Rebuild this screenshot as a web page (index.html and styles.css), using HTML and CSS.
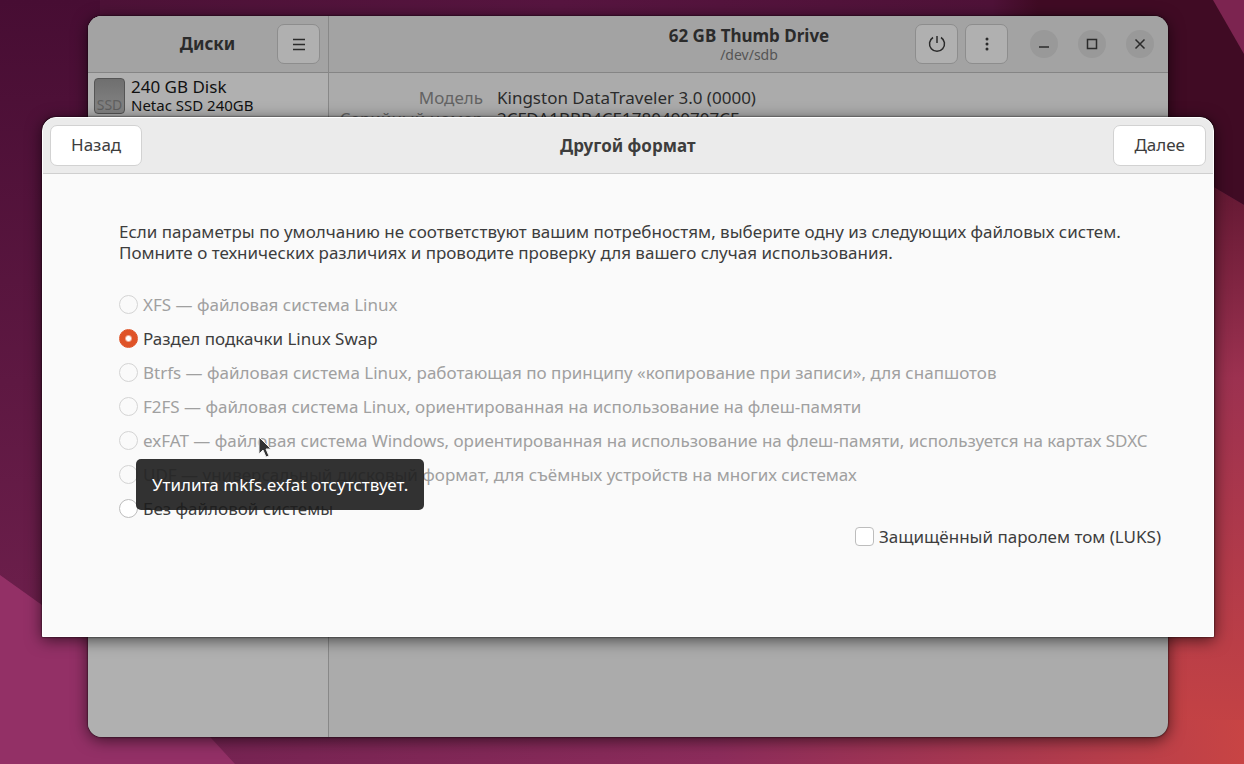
FILE: index.html
```html
<!DOCTYPE html>
<html lang="ru">
<head>
  <meta charset="UTF-8" />
  <meta name="viewport" content="width=device-width, initial-scale=1.0" />
  <title>Диски</title>
  <link rel="stylesheet" href="styles.css">
</head>
<body>
  <!-- Wallpaper -->
  <svg class="wallpaper" viewBox="0 0 1244 764" preserveAspectRatio="none" aria-hidden="true">
    <defs>
      <linearGradient id="left" x1="0" y1="0" x2="0" y2="1">
        <stop offset="0" stop-color="#470d33" />
        <stop offset="1" stop-color="#752351" />
      </linearGradient>
      <linearGradient id="top" x1="0" y1="0" x2="1" y2="0">
        <stop offset="0" stop-color="#4d1237" />
        <stop offset="0.4" stop-color="#571540" />
        <stop offset="0.78" stop-color="#4f1238" />
        <stop offset="0.82" stop-color="#400b24" />
        <stop offset="1" stop-color="#400b24" />
      </linearGradient>
      <linearGradient id="right" x1="0" y1="0" x2="0" y2="1">
        <stop offset="0" stop-color="#501029" />
        <stop offset="0.4" stop-color="#9c3150" />
        <stop offset="1" stop-color="#c84443" />
      </linearGradient>
      <linearGradient id="bottom" x1="0" y1="0" x2="1" y2="0">
        <stop offset="0" stop-color="#752352" />
        <stop offset="0.5" stop-color="#8c2c5b" />
        <stop offset="0.8" stop-color="#ad3a4e" />
        <stop offset="1" stop-color="#c84444" />
      </linearGradient>
    </defs>
    <rect width="1244" height="764" fill="url(#left)" />
    <path d="M100 0H1244V205L1100 120H100Z" fill="url(#top)" />
    <path d="M1213 0H1244V54Z" fill="#7c2450" />
    <path d="M1100 120L1244 205V764H1100Z" fill="url(#right)" />
    <path d="M190 720H1244V764H235Z" fill="url(#bottom)" />
    <path d="M0 575L42 605L130 650L235 764H0Z" fill="#933066" />
  </svg>

  <main class="window">
    <aside class="sidebar">
      <header class="headerbar sidebar-header">
        <h1 class="title">Диски</h1>
        <button class="button icon-button" aria-label="Меню">
          <svg width="16" height="16" viewBox="0 0 16 16"><path d="M2 3.5h12M2 8.5h12M2 13.5h12" /></svg>
        </button>
      </header>
      <div class="disk">
        <span class="disk-icon">SSD</span>
        <div>
          <div class="disk-name">240 GB Disk</div>
          <div class="disk-model">Netac SSD 240GB</div>
        </div>
      </div>
    </aside>

    <section class="content">
      <header class="headerbar content-header">
        <div class="heading">
          <h2 class="title">62 GB Thumb Drive</h2>
          <div class="subtitle">/dev/sdb</div>
        </div>
        <div class="header-actions">
          <button class="button icon-button" aria-label="Отключить">
            <svg width="20" height="20" viewBox="0 0 20 20"><path d="M10 2v7M6 3.5a7.5 7.5 0 1 0 8 0" /></svg>
          </button>
          <button class="button icon-button" aria-label="Ещё">
            <svg class="dots" width="16" height="16" viewBox="0 0 16 16"><circle cx="8" cy="3" r="1.5" /><circle cx="8" cy="8" r="1.5" /><circle cx="8" cy="13" r="1.5" /></svg>
          </button>
        </div>
        <div class="window-controls">
          <button class="control" aria-label="Свернуть">
            <svg width="14" height="14" viewBox="0 0 14 14"><path d="M2 10h10" /></svg>
          </button>
          <button class="control" aria-label="Развернуть">
            <svg width="14" height="14" viewBox="0 0 14 14"><path d="M2.5 2.5h9v9h-9z" /></svg>
          </button>
          <button class="control" aria-label="Закрыть">
            <svg width="14" height="14" viewBox="0 0 14 14"><path d="M2.5 2.5l9 9M11.5 2.5l-9 9" /></svg>
          </button>
        </div>
      </header>
      <dl class="details">
        <dt>Модель</dt>
        <dd>Kingston DataTraveler 3.0 (0000)</dd>
        <dt>Серийный номер</dt>
        <dd>2CFDA1BBB4CE1780490707CF</dd>
      </dl>
    </section>
  </main>

  <form class="dialog" role="dialog" aria-labelledby="dialog-title">
    <header class="dialog-header">
      <button type="button" class="button">Назад</button>
      <h2 class="title" id="dialog-title">Другой формат</h2>
      <button type="button" class="button">Далее</button>
    </header>
    <div class="dialog-body">
      <p class="intro">Если параметры по умолчанию не соответствуют вашим потребностям, выберите одну из следующих файловых систем.<br>Помните о технических различиях и проводите проверку для вашего случая использования.</p>
      <div class="options">
        <label class="option"><input type="radio" name="fs" disabled><span>XFS — файловая система Linux</span></label>
        <label class="option"><input type="radio" name="fs" checked><span>Раздел подкачки Linux Swap</span></label>
        <label class="option"><input type="radio" name="fs" disabled><span>Btrfs — файловая система Linux, работающая по принципу «копирование при записи», для снапшотов</span></label>
        <label class="option"><input type="radio" name="fs" disabled><span>F2FS — файловая система Linux, ориентированная на использование на флеш-памяти</span></label>
        <div class="tooltip-anchor">
          <label class="option"><input type="radio" name="fs" disabled aria-describedby="exfat-tip"><span>exFAT — файловая система Windows, ориентированная на использование на флеш-памяти, используется на картах SDXC</span></label>
          <svg class="cursor" width="14" height="22" viewBox="0 0 14 22" aria-hidden="true"><path d="M1 1v17l4-4 3 7 3-1-3-7h5z" /></svg>
          <div class="tooltip" id="exfat-tip" role="tooltip">Утилита mkfs.exfat отсутствует.</div>
        </div>
        <label class="option"><input type="radio" name="fs" disabled><span>UDF — универсальный дисковый формат, для съёмных устройств на многих системах</span></label>
        <label class="option"><input type="radio" name="fs"><span>Без файловой системы</span></label>
      </div>
      <label class="option luks"><input type="checkbox"><span>Защищённый паролем том (LUKS)</span></label>
    </div>
  </form>
</body>
</html>
```
FILE: styles.css
```css
* {
  box-sizing: border-box;
}

body {
  margin: 0;
  min-height: 100vh;
  position: relative;
  overflow: hidden;
  background: #571540;
  color: #3d3d3d;
  font-family: "Noto Sans", "Open Sans", sans-serif;
  font-size: 17px;
  line-height: 21px;
}

h1, h2, p, dl, dd {
  margin: 0;
}

button, input {
  font: inherit;
  color: inherit;
}

svg {
  display: block;
  fill: none;
  stroke: currentColor;
  stroke-width: 1.5;
}

.wallpaper {
  position: absolute;
  inset: 0;
  width: 100%;
  height: 100%;
  stroke: none;
}

.title {
  font-size: 17px;
  line-height: 21px;
  font-weight: 700;
}

/* Disks window */
.window {
  position: absolute;
  inset: 16px 76px 27px 88px;
  display: flex;
  overflow: hidden;
  border-radius: 14px;
  background: #ababab;
  color: #2b2b2b;
  box-shadow: 0 3px 16px rgba(0, 0, 0, 0.6), 0 0 2px #000;
}

.sidebar {
  width: 241px;
  flex-shrink: 0;
  border-right: 1px solid #888;
  background: #b0b0b0;
}

.content {
  flex: 1;
}

.headerbar {
  display: flex;
  align-items: center;
  height: 57px;
  padding-bottom: 1px;
  border-bottom: 1px solid #858585;
  background: #a3a3a3;
}

.sidebar-header {
  padding-right: 8px;
}

.sidebar-header .title {
  flex: 1;
  padding-left: 50px;
  text-align: center;
}

.content-header {
  padding-right: 14px;
}

.heading {
  flex: 1;
  padding-left: 254px;
  text-align: center;
}

.subtitle {
  font-size: 14px;
  line-height: 17px;
  color: #555;
}

.header-actions {
  display: flex;
  gap: 7px;
}

.window-controls {
  display: flex;
  gap: 20px;
  padding-left: 22px;
}

.button {
  height: 41px;
  padding: 0 20px 2px;
  border: 1px solid #d2d2d2;
  border-radius: 7px;
  background: #fff;
}

.icon-button {
  display: grid;
  place-items: center;
  width: 43px;
  height: 40px;
  padding: 0;
  border-color: #8d8d8d;
  background: #b0b0b0;
}

.dots {
  fill: currentColor;
  stroke: none;
}

.control {
  display: grid;
  place-items: center;
  width: 28px;
  height: 28px;
  padding: 0;
  border: 0;
  border-radius: 50%;
  background: #999;
}

.disk {
  display: flex;
  gap: 6px;
  padding: 5px 6px;
  color: #111;
}

.disk-icon {
  display: flex;
  align-items: flex-end;
  justify-content: center;
  width: 31px;
  height: 36px;
  border: 1px solid #555;
  border-radius: 4px;
  background: linear-gradient(#6f6f6f, #858585);
  color: #606060;
  font-size: 14px;
  line-height: 17px;
}

.disk-name {
  line-height: 18px;
}

.disk-model {
  font-size: 15px;
  line-height: 18px;
}

.details {
  display: grid;
  grid-template-columns: 154px 1fr;
  column-gap: 14px;
  padding-top: 14px;
}

.details dt {
  text-align: right;
  white-space: nowrap;
  color: #636363;
}

/* Format dialog */
.dialog {
  position: absolute;
  top: 117px;
  left: 42px;
  right: 30px;
  border: 1px solid #fff;
  border-radius: 14px 14px 0 0;
  background: #fafafa;
  box-shadow: 0 3px 16px rgba(0, 0, 0, 0.6), 0 0 2px #000;
}

.dialog-header {
  display: flex;
  align-items: center;
  justify-content: space-between;
  height: 56px;
  padding: 0 7px 1px;
  border-bottom: 1px solid #cfcfcf;
  border-radius: 13px 13px 0 0;
  background: #ebebeb;
}

.dialog-body {
  padding: 47px 52px 89px 76px;
}

.intro {
  padding-bottom: 31px;
}

.options {
  display: grid;
  gap: 13px;
  padding-bottom: 7px;
}

.option {
  display: flex;
  align-items: center;
  gap: 5px;
  white-space: nowrap;
}

.option input {
  appearance: none;
  flex-shrink: 0;
  width: 19px;
  height: 19px;
  margin: 0;
  border: 1px solid #bdbdbd;
  border-radius: 50%;
  background: #fff;
}

.option input[type="checkbox"] {
  border-radius: 4px;
}

.option input:checked {
  border-color: #df5327;
  background: radial-gradient(circle, #fff 2px, #df5327 4px);
}

.option input:disabled {
  border-color: #d4d4d4;
  background: #fafafa;
}

.option input:disabled + span {
  color: #a0a0a0;
}

.luks {
  justify-content: flex-end;
}

.tooltip-anchor {
  position: relative;
}

.tooltip {
  position: absolute;
  top: 29px;
  left: 17px;
  z-index: 1;
  padding: 15px 16px;
  border-radius: 5px;
  background: rgba(28, 28, 28, 0.9);
  color: #fff;
  white-space: nowrap;
}

.cursor {
  position: absolute;
  top: 6px;
  left: 139px;
  z-index: 2;
  fill: #333;
  stroke: #eee;
  stroke-width: 1;
}
```
